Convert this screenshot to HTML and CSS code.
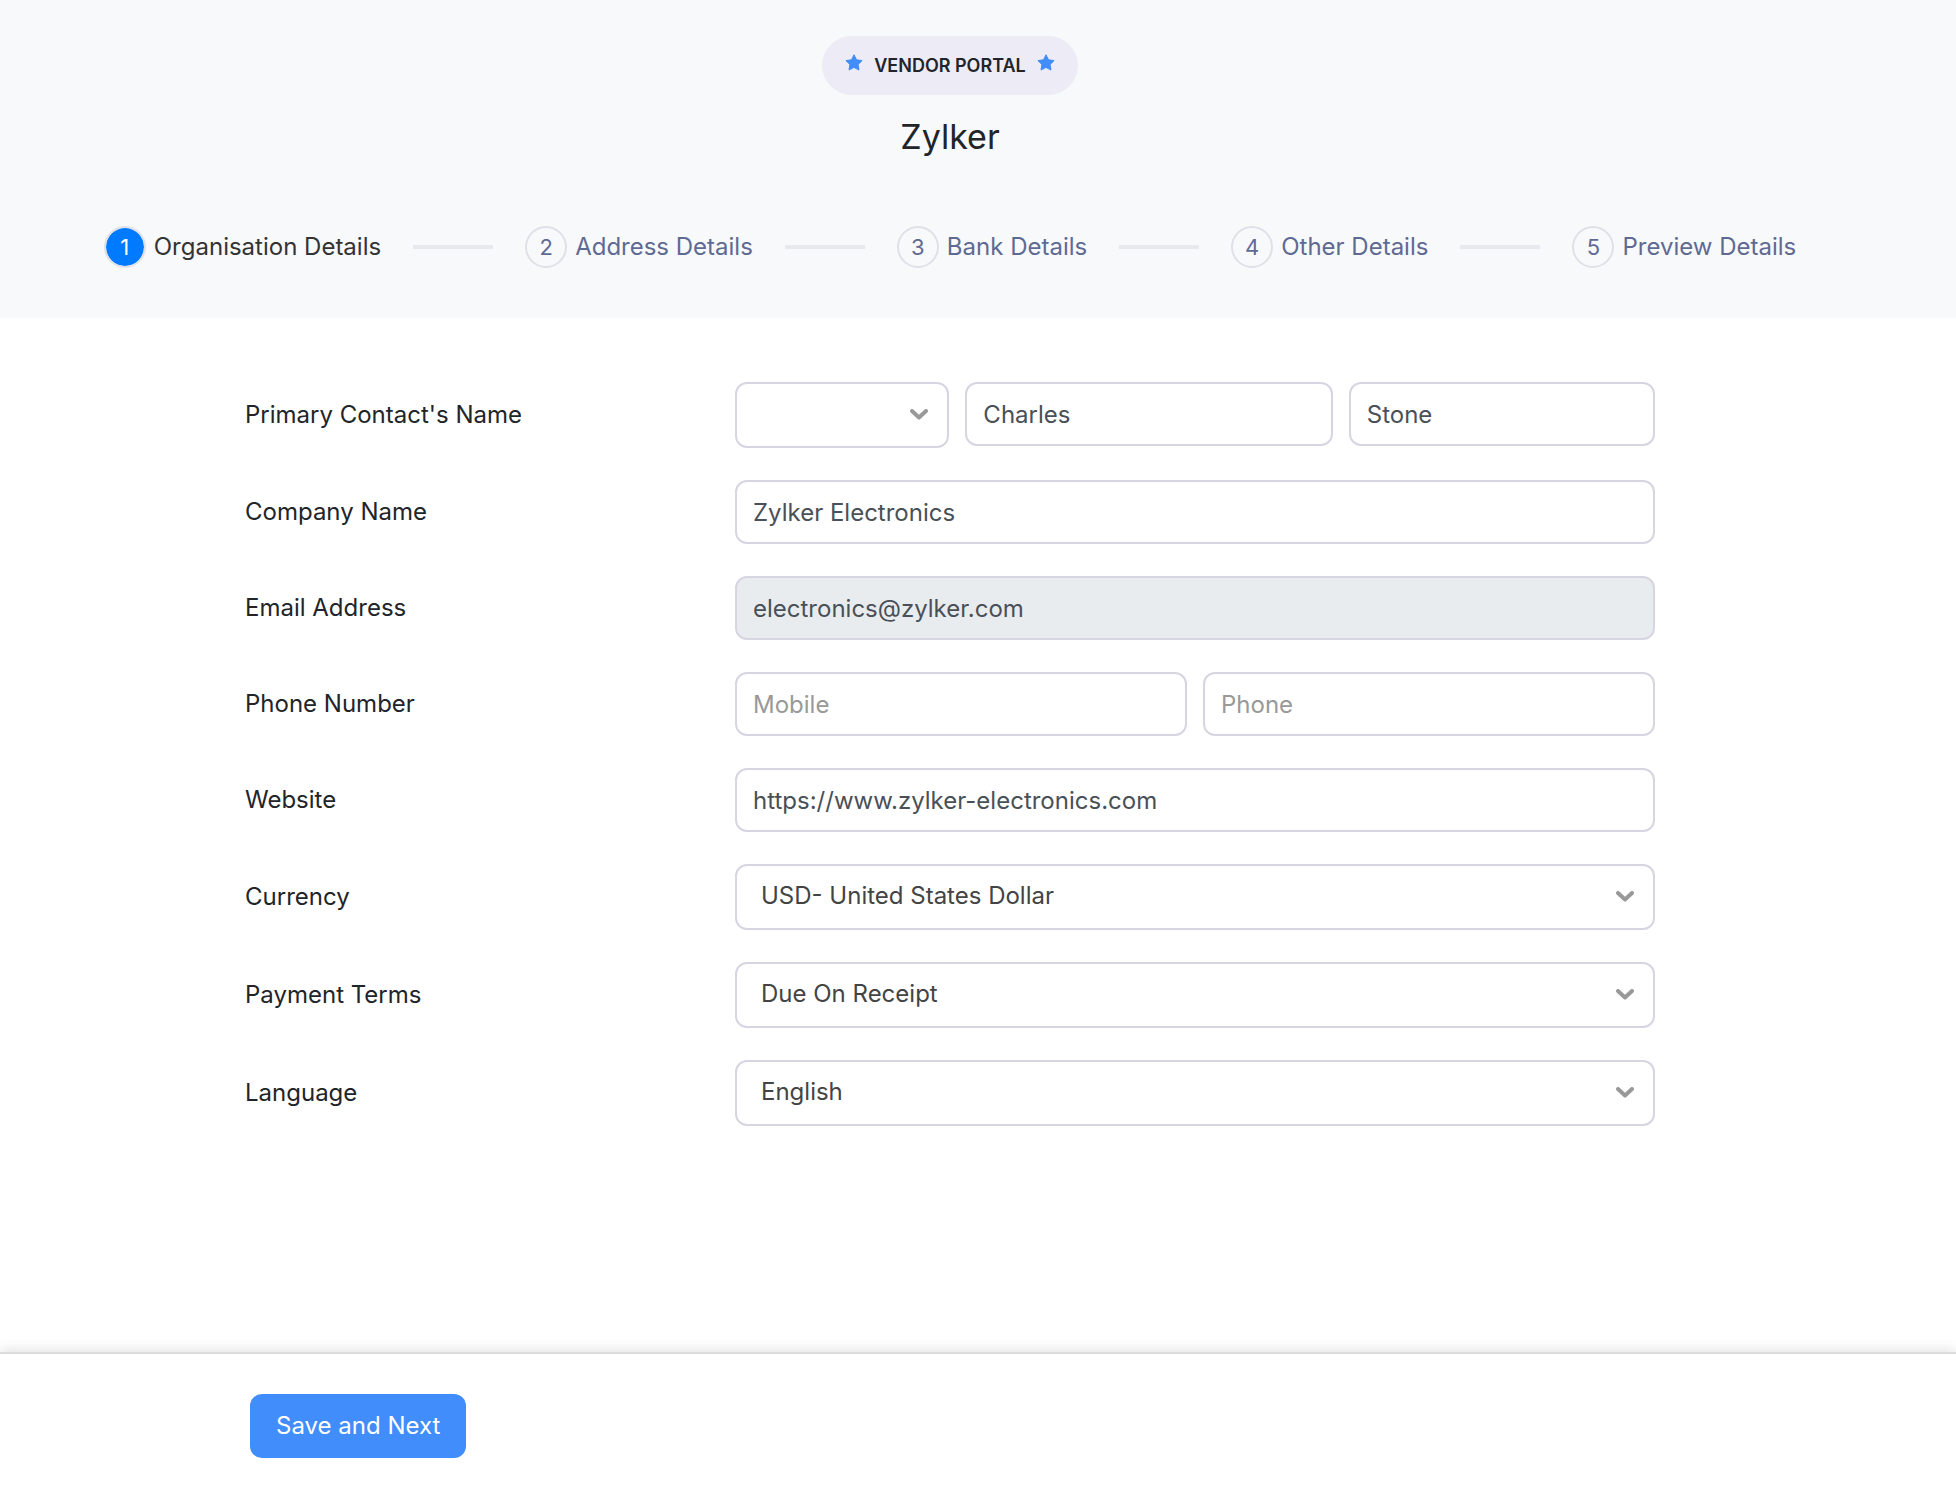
FILE: index.html
```html
<!DOCTYPE html>
<html lang="en">
<head>
<meta charset="utf-8">
<meta name="viewport" content="width=device-width, initial-scale=1">
<title>Zylker - Vendor Portal</title>
<link rel="stylesheet" href="styles.css">
</head>
<body>
<header class="portal-header">
  <div class="badge">
    <svg class="star" viewBox="0 0 18 17" aria-hidden="true"><path d="M9 .8l2.500 5 5.600.8-4 3.900.9 5.500L9 13.400 4 16l.9-5.500-4-3.900 5.600-.8z"/></svg>
    <span>VENDOR PORTAL</span>
    <svg class="star" viewBox="0 0 18 17" aria-hidden="true"><path d="M9 .8l2.500 5 5.600.8-4 3.900.9 5.500L9 13.400 4 16l.9-5.500-4-3.900 5.600-.8z"/></svg>
  </div>
  <h1 class="org-name">Zylker</h1>
  <ol class="steps">
    <li class="step step-active"><span class="step-number">1</span>Organisation Details</li>
    <li class="step"><span class="step-number">2</span>Address Details</li>
    <li class="step"><span class="step-number">3</span>Bank Details</li>
    <li class="step"><span class="step-number">4</span>Other Details</li>
    <li class="step"><span class="step-number">5</span>Preview Details</li>
  </ol>
</header>
<form class="vendor-form">
  <main class="fields">
    <div class="row">
      <label class="label" for="first-name">Primary Contact's Name</label>
      <div class="name-group">
        <div class="select-wrap">
          <select class="control select" aria-label="Salutation"><option></option><option>Mr.</option><option>Mrs.</option><option>Ms.</option></select>
          <svg class="chevron" viewBox="0 0 18 11" aria-hidden="true"><path d="M2 2l7 6.500L16 2"/></svg>
        </div>
        <input class="control" id="first-name" type="text" value="Charles">
        <input class="control" type="text" value="Stone" aria-label="Last name">
      </div>
    </div>
    <div class="row">
      <label class="label" for="company">Company Name</label>
      <input class="control" id="company" type="text" value="Zylker Electronics">
    </div>
    <div class="row">
      <label class="label" for="email">Email Address</label>
      <input class="control" id="email" type="email" value="electronics@zylker.com" disabled>
    </div>
    <div class="row">
      <label class="label" for="mobile">Phone Number</label>
      <div class="phone-group">
        <input class="control" id="mobile" type="tel" placeholder="Mobile">
        <input class="control" type="tel" placeholder="Phone" aria-label="Phone">
      </div>
    </div>
    <div class="row">
      <label class="label" for="website">Website</label>
      <input class="control" id="website" type="url" value="https://www.zylker-electronics.com">
    </div>
    <div class="row">
      <label class="label" for="currency">Currency</label>
      <div class="select-wrap">
        <select class="control select" id="currency"><option>USD- United States Dollar</option></select>
        <svg class="chevron" viewBox="0 0 18 11" aria-hidden="true"><path d="M2 2l7 6.500L16 2"/></svg>
      </div>
    </div>
    <div class="row">
      <label class="label" for="terms">Payment Terms</label>
      <div class="select-wrap">
        <select class="control select" id="terms"><option>Due On Receipt</option></select>
        <svg class="chevron" viewBox="0 0 18 11" aria-hidden="true"><path d="M2 2l7 6.500L16 2"/></svg>
      </div>
    </div>
    <div class="row">
      <label class="label" for="language">Language</label>
      <div class="select-wrap">
        <select class="control select" id="language"><option>English</option></select>
        <svg class="chevron" viewBox="0 0 18 11" aria-hidden="true"><path d="M2 2l7 6.500L16 2"/></svg>
      </div>
    </div>
  </main>
  <footer class="actions">
    <button class="save" type="submit">Save and Next</button>
  </footer>
</form>
</body>
</html>
```
FILE: styles.css
```css
* {
  box-sizing: border-box;
}

body {
  margin: 0;
  min-height: 100vh;
  display: flex;
  flex-direction: column;
  background: #fff;
  color: #212529;
  font: 24px/36px Inter, "Liberation Sans", sans-serif;
}

.portal-header {
  display: flex;
  flex-direction: column;
  align-items: center;
  padding: 36px 56px 50px 0;
  background: #f8f9fb;
}

.badge {
  display: flex;
  align-items: center;
  gap: 11px;
  height: 59px;
  padding: 0 23px;
  border-radius: 30px;
  background: #edebf5;
  font-size: 18px;
  font-weight: 600;
}

.star {
  width: 18px;
  height: 17px;
  margin-bottom: 6px;
  overflow: visible;
  fill: #408dfb;
  stroke: #408dfb;
  stroke-width: 1;
  stroke-linejoin: round;
}

.org-name {
  margin: 16px 0 64px;
  font-size: 34px;
  font-weight: 400;
  line-height: 51px;
}

.steps {
  display: flex;
  margin: 0;
  padding: 0;
  list-style: none;
  white-space: nowrap;
}

.step {
  display: flex;
  align-items: center;
  gap: 8px;
  color: #5f6a93;
}

.step + .step::before {
  content: "";
  width: 80px;
  height: 4px;
  margin: 0 24px 0 32px;
  background: #e8e8ef;
}

.step-active {
  color: #333;
}

.step-number {
  display: flex;
  align-items: center;
  justify-content: center;
  width: 42px;
  height: 42px;
  border: 2px solid #e0e1e8;
  border-radius: 50%;
  font-size: 22px;
}

.step-active .step-number {
  background: #007bff;
  background-clip: padding-box;
  color: #fff;
}

.vendor-form {
  flex: 1;
  display: flex;
  flex-direction: column;
}

.fields {
  flex: 1;
  display: flex;
  flex-direction: column;
  gap: 32px;
  padding: 64px 301px 64px 245px;
}

.row {
  display: grid;
  grid-template-columns: 490px 1fr;
  align-items: center;
}

.name-group {
  display: grid;
  grid-template-columns: 7fr 12fr 10fr;
  align-items: start;
  gap: 16px;
}

.phone-group {
  display: grid;
  grid-template-columns: 1fr 1fr;
  gap: 16px;
}

.control {
  width: 100%;
  min-width: 0;
  height: 64px;
  padding: 0 16px;
  border: 2px solid #d7d5e2;
  border-radius: 12px;
  background: #fff;
  color: #495057;
  font: inherit;
}

.control:disabled {
  background: #e9ecef;
}

.control::placeholder {
  color: #999;
  opacity: 1;
}

.select-wrap {
  display: grid;
  position: relative;
}

.select {
  height: 66px;
  padding: 0 56px 2px 24px;
  appearance: none;
  color: #444;
}

.chevron {
  position: absolute;
  top: 27px;
  right: 21px;
  width: 18px;
  height: 11px;
  fill: none;
  stroke: #999;
  stroke-width: 4;
  stroke-linecap: round;
  stroke-linejoin: round;
  pointer-events: none;
}

.actions {
  padding: 40px 250px;
  border-top: 2px solid #dcdcdc;
  box-shadow: 0 -2px 12px rgba(0, 0, 0, 0.12);
}

.save {
  height: 64px;
  padding: 0 26px;
  border: 0;
  border-radius: 12px;
  background: #408dfb;
  color: #fff;
  font: inherit;
}
```
